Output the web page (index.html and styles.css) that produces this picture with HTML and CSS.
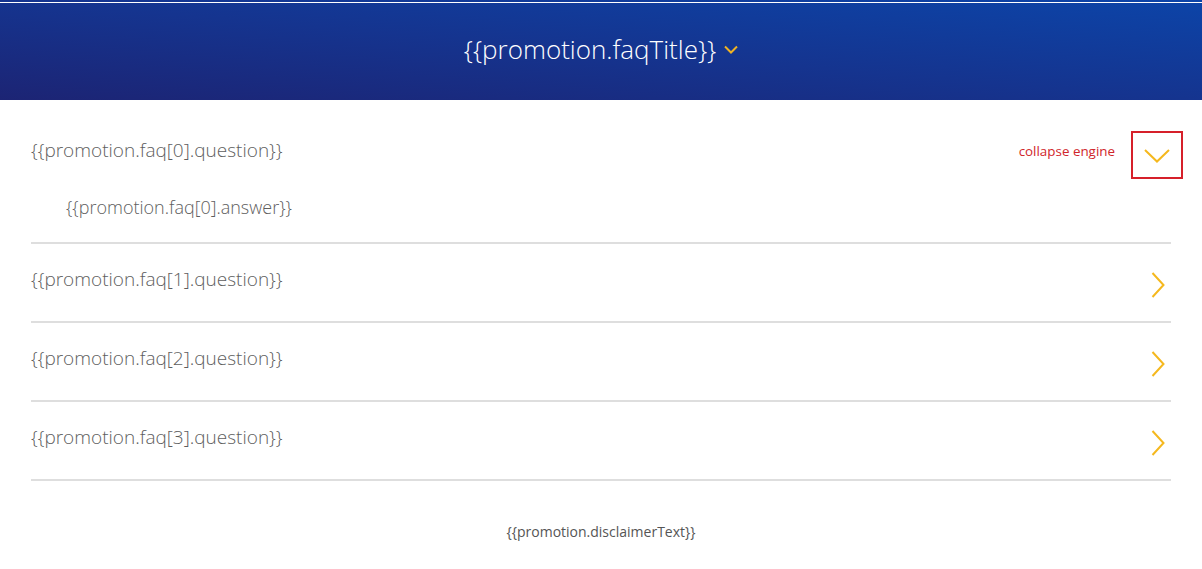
FILE: index.html
```html
<!DOCTYPE html>
<html>
<head>
<meta charset="utf-8">
<link rel="stylesheet" href="styles.css">
</head>
<body>
<header class="hero">
  <h1 class="hero-title">{{promotion.faqTitle}}</h1>
  <svg class="hero-chevron" width="14" height="9" viewBox="0 0 14 9"><path d="M1 1.5 L7 7.5 L13 1.5" fill="none" stroke="#f0b323" stroke-width="2"/></svg>
</header>
<main class="faq">
  <section class="faq-item open">
    <div class="faq-head">
      <div class="faq-q">{{promotion.faq[0].question}}</div>
      <div class="faq-note">collapse engine</div>
      <div class="faq-toggle">
        <svg width="26" height="14" viewBox="0 0 26 14"><path d="M1 1 L13 12.5 L25 1" fill="none" stroke="#f5b81e" stroke-width="2"/></svg>
      </div>
    </div>
    <div class="faq-a">{{promotion.faq[0].answer}}</div>
  </section>
  <section class="faq-item closed">
    <div class="faq-q">{{promotion.faq[1].question}}</div>
    <svg class="faq-arrow" width="14" height="26" viewBox="0 0 14 26"><path d="M1.5 1 L12.5 13 L1.5 25" fill="none" stroke="#f5b81e" stroke-width="2"/></svg>
  </section>
  <section class="faq-item closed">
    <div class="faq-q">{{promotion.faq[2].question}}</div>
    <svg class="faq-arrow" width="14" height="26" viewBox="0 0 14 26"><path d="M1.5 1 L12.5 13 L1.5 25" fill="none" stroke="#f5b81e" stroke-width="2"/></svg>
  </section>
  <section class="faq-item closed">
    <div class="faq-q">{{promotion.faq[3].question}}</div>
    <svg class="faq-arrow" width="14" height="26" viewBox="0 0 14 26"><path d="M1.5 1 L12.5 13 L1.5 25" fill="none" stroke="#f5b81e" stroke-width="2"/></svg>
  </section>
  <p class="disclaimer">{{promotion.disclaimerText}}</p>
</main>
</body>
</html>
```
FILE: styles.css
```css
* { box-sizing: border-box; }
html, body { margin: 0; padding: 0; background: #fff; }
body { font-family: "Open Sans", "Liberation Sans", sans-serif; }

.hero {
  height: 100px;
  display: flex;
  align-items: center;
  justify-content: center;
  gap: 8px;
  padding-bottom: 2px;
  background:
    linear-gradient(to bottom, transparent 2px, #ffffff 2px, #ffffff 3px, transparent 3px),
    linear-gradient(to top right, #1c2474 0%, #15348f 50%, #0c44a8 100%);
}
.hero-title {
  margin: 0;
  font-weight: 300;
  font-size: 26px;
  line-height: 32px;
  color: #fff;
}
.hero-chevron { margin-top: 0; }

.faq { padding: 0 31px; }
.faq-item { border-bottom: 2px solid #dedede; }
.faq-q {
  font-size: 19px;
  font-weight: 300;
  line-height: 26px;
  color: #5e5e5e;
}
.faq-head {
  display: flex;
  align-items: flex-start;
  padding-top: 31px;
}
.faq-head .faq-q { margin-top: 6px; flex: 1; }
.faq-note {
  margin-top: 10px;
  font-size: 13.4px;
  line-height: 20px;
  color: #d0262b;
  margin-right: 16px;
}
.faq-toggle {
  width: 52px;
  height: 48px;
  border: 2px solid #d6202a;
  margin-right: -12px;
  display: flex;
  align-items: center;
  justify-content: center;
  padding-top: 1px;
}
.faq-a {
  margin-top: 16px;
  padding: 0 0 23px 35px;
  font-size: 18px;
  font-weight: 300;
  line-height: 24px;
  color: #5e5e5e;
}
.closed {
  height: 79px;
  display: flex;
  justify-content: space-between;
  align-items: flex-start;
  padding-top: 22px;
}
.faq-arrow { margin-top: 6px; margin-right: 6px; }
.disclaimer {
  margin: 41px 0 0;
  text-align: center;
  font-size: 14px;
  line-height: 20px;
  color: #555;
}
```
